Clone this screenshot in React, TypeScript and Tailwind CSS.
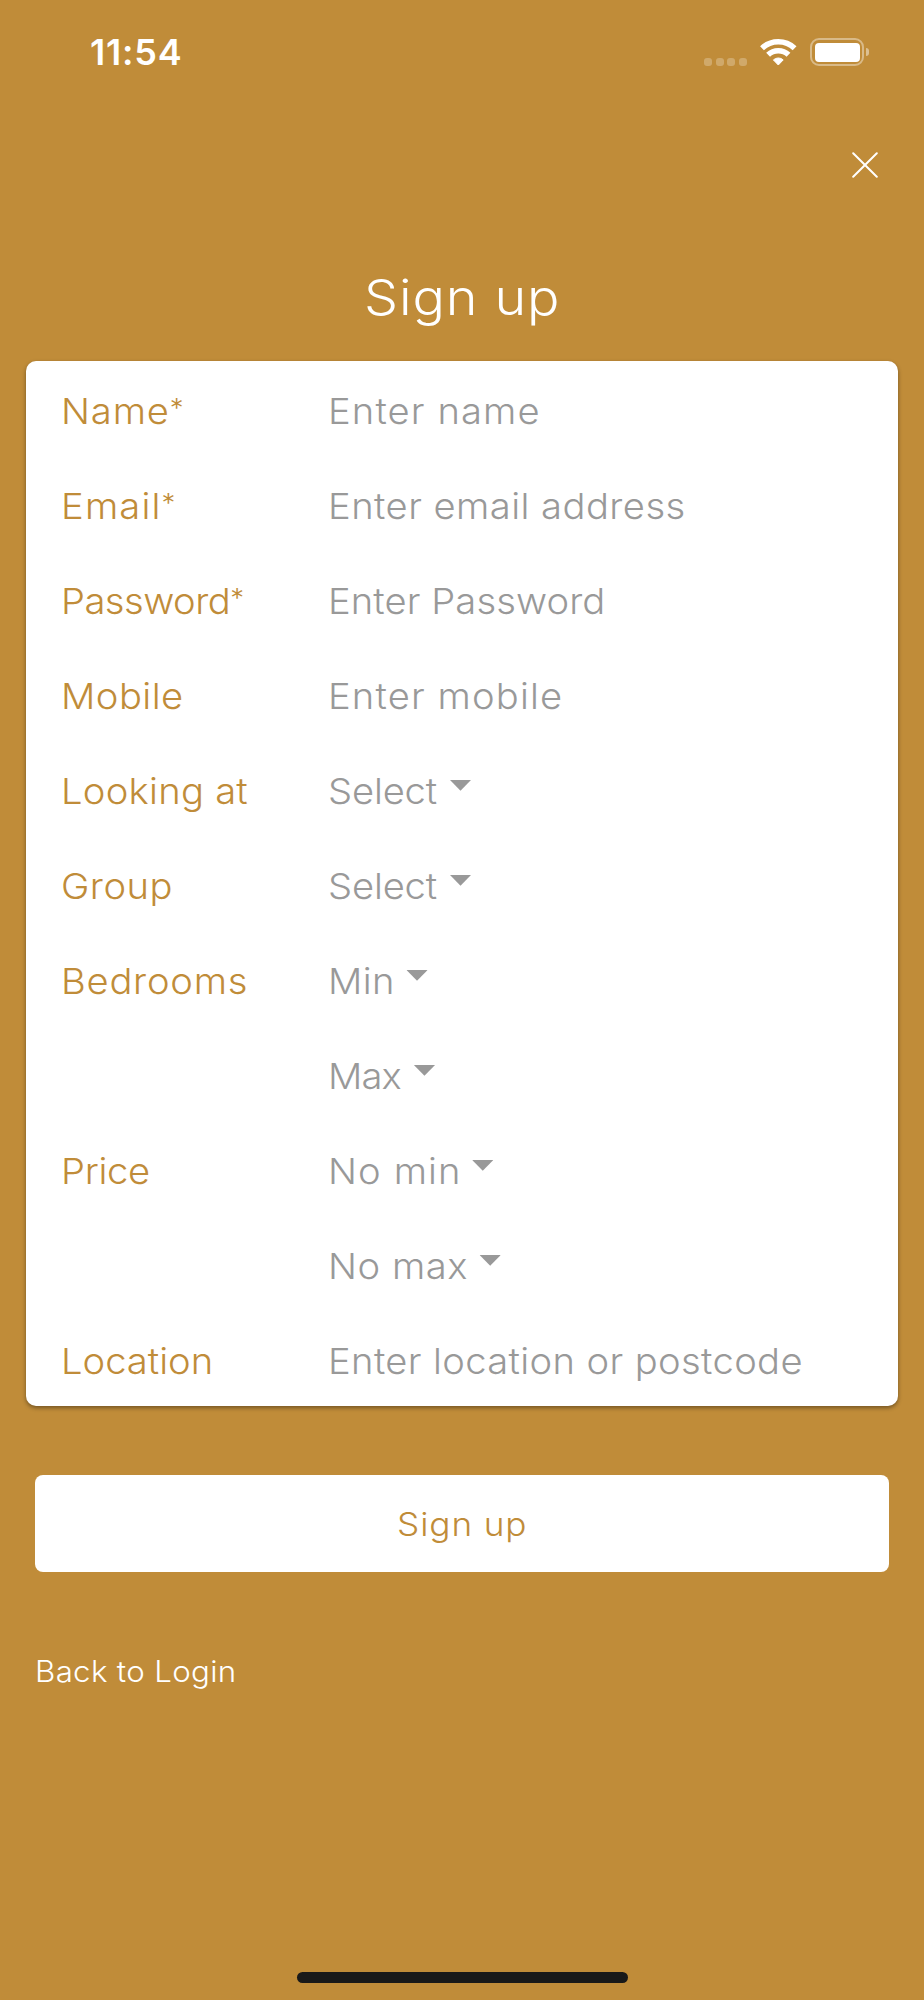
import { clsx } from 'clsx';

type Field = {
  label?: string;
  labelClass?: string;
  required?: boolean;
  value: string;
  valueClass: string;
  // spacing before the dropdown arrow, only set on selects
  caretClass?: string;
};

const FIELDS: Field[] = [
  { label: 'Name', labelClass: 'tracking-[0.8px]', required: true, value: 'Enter name', valueClass: 'tracking-[1.05px]' },
  { label: 'Email', labelClass: 'tracking-[1.1px]', required: true, value: 'Enter email address', valueClass: 'tracking-[0.42px]' },
  { label: 'Password', labelClass: 'tracking-[-0.5px]', required: true, value: 'Enter Password', valueClass: 'tracking-[0.08px]' },
  { label: 'Mobile', labelClass: 'tracking-[0.44px]', value: 'Enter mobile', valueClass: 'tracking-[1.07px]' },
  { label: 'Looking at', labelClass: 'tracking-[0.25px]', value: 'Select', valueClass: 'tracking-[-0.15px]', caretClass: 'ml-[11.8px]' },
  { label: 'Group', labelClass: 'tracking-[0.45px]', value: 'Select', valueClass: 'tracking-[-0.15px]', caretClass: 'ml-[11.8px]' },
  { label: 'Bedrooms', labelClass: 'tracking-[0.7px]', value: 'Min', valueClass: 'tracking-[0.3px]', caretClass: 'ml-[10.8px]' },
  { value: 'Max', valueClass: 'tracking-[-0.9px]', caretClass: 'ml-[12px]' },
  { label: 'Price', labelClass: 'tracking-[-0.3px]', value: 'No min', valueClass: 'tracking-[1.04px]', caretClass: 'ml-[10px]' },
  { value: 'No max', valueClass: 'tracking-[0.5px]', caretClass: 'ml-[11px]' },
  { label: 'Location', labelClass: 'tracking-[0px]', value: 'Enter location or postcode', valueClass: 'tracking-[0.34px]' },
];

function WifiIcon() {
  return (
    <svg width="37" height="29" viewBox="0 0 37 29" fill="none" stroke="white" strokeWidth="5.6">
      <path d="M2 10.2A23.9 23.9 0 0 1 34.6 10.2" />
      <path d="M8.1 16.8A14.9 14.9 0 0 1 28.5 16.8" />
      <path
        d="M18.3 27L13.4 21.9A7.2 7.2 0 0 1 23.2 21.9Z"
        fill="white"
        strokeWidth="1"
        strokeLinejoin="round"
      />
    </svg>
  );
}

function Battery() {
  return (
    <div className="flex items-center gap-[2px]">
      <div className="h-7 w-[54px] rounded-[9px] border-2 border-white/40 p-[2.5px]">
        <div className="h-full rounded-[4px] bg-white" />
      </div>
      <div className="h-2 w-[3px] rounded-r-full bg-white/45" />
    </div>
  );
}

function StatusBar() {
  return (
    <div className="flex h-[104px] items-center justify-between pr-[55px] pl-[90px]">
      <span className="text-[36px] font-semibold tracking-[0.8px]">11:54</span>
      <div className="flex items-center">
        <div className="mt-[20px] mr-[13px] flex gap-[3.6px]">
          {[0, 1, 2, 3].map(i => (
            <span key={i} className="size-2 rounded-[3px] bg-white/25" />
          ))}
        </div>
        <WifiIcon />
        <div className="ml-[13px]">
          <Battery />
        </div>
      </div>
    </div>
  );
}

function FieldRow({ label, labelClass, required, value, valueClass, caretClass }: Field) {
  return (
    <div className="flex h-[95px] items-center text-[36px]">
      <div className="w-[267px] shrink-0 text-[#c08c39]">
        <div className="flex origin-left scale-x-106 items-center">
          <span className={labelClass}>{label}</span>
          {required && <span className="mb-[7px] text-[26px]">*</span>}
        </div>
      </div>
      <div className="flex origin-left scale-x-106 items-center text-[#999]">
        <span className={valueClass}>{value}</span>
        {caretClass && (
          <svg className={clsx('mb-[10px]', caretClass)} width="20" height="11" viewBox="0 0 20 11" fill="currentColor">
            <path d="M0 0H20L10 10.8Z" />
          </svg>
        )}
      </div>
    </div>
  );
}

export default function App() {
  return (
    <div className="flex h-[2000px] w-[924px] flex-col bg-[#c08c39] font-['Inter',sans-serif] font-[350] whitespace-nowrap text-white">
      <StatusBar />

      <div className="flex h-[121px] items-center justify-end pr-[46px]">
        <button aria-label="Close">
          <svg width="26" height="26" viewBox="0 0 26 26" stroke="white" strokeWidth="2" strokeLinecap="round">
            <path d="M1.2 1.2L24.8 24.8M24.8 1.2L1.2 24.8" />
          </svg>
        </button>
      </div>

      <h1 className="flex h-[136px] items-center justify-center pt-[9px] text-[49px] tracking-[0.8px]">
        <span className="scale-x-110">Sign up</span>
      </h1>

      <div className="mx-[26px] h-[1045px] rounded-[10px] bg-white pt-[2px] pl-[35px] shadow-[0_2px_4px_rgba(0,0,0,0.4)]">
        {FIELDS.map((field, i) => (
          <FieldRow key={i} {...field} />
        ))}
      </div>

      <button className="mx-[35px] mt-[69px] h-[97px] rounded-lg bg-white pt-[2px] text-[32px] tracking-[0.8px] text-[#c08c39]">
        <span className="inline-block scale-x-110">Sign up</span>
      </button>

      <a className="mt-[80px] ml-[35px] origin-left scale-x-106 self-start text-[29.5px] leading-[38px] tracking-[0.3px]">
        Back to Login
      </a>

      <div className="mx-auto mt-auto mb-[17px] h-[11px] w-[331px] rounded-full bg-[#191919]" />
    </div>
  );
}
